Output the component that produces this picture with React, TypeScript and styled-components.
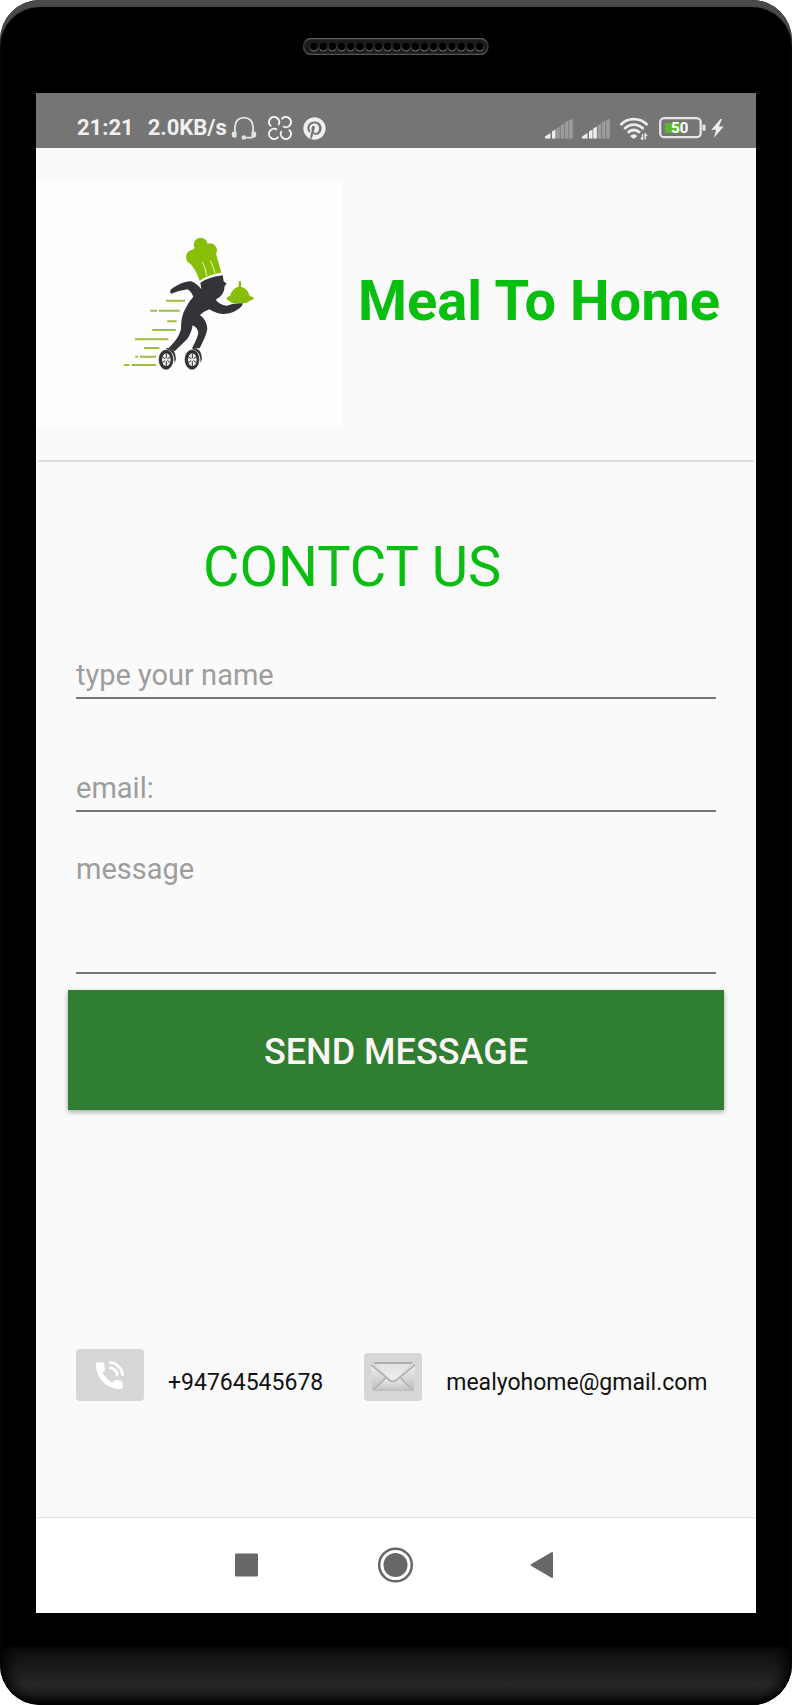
import React from "react";
import styled, { createGlobalStyle } from "styled-components";
import { FaPinterest } from "react-icons/fa";

const GlobalStyle = createGlobalStyle`
  *, *::before, *::after { box-sizing: border-box; }
  body { margin: 0; background: #fff; font-family: Roboto, "Liberation Sans", sans-serif; }
  h1, h2 { margin: 0; }
  svg { display: block; flex: none; }
`;

const Phone = styled.div`
  display: flex;
  flex-direction: column;
  min-height: 100vh;
  background: #000;
  border-radius: 40px;
  overflow: hidden;
  box-shadow: inset 0 7px 1px #4a4a4a;
`;

const Earpiece = styled.div`
  display: flex;
  justify-content: center;
  padding: 38px 0;
`;

const Screen = styled.main`
  display: flex;
  flex: 1;
  flex-direction: column;
  margin: 0 36px;
  background: #fafafa;
`;

const Chin = styled.div`
  height: 58px;
  margin-top: 34px;
  border-radius: 0 0 40px 40px;
  background: linear-gradient(#0c0c0c, #272727 66%, #1c1c1c 82%, #000);
  box-shadow: inset 12px 0 14px -6px #000, inset -12px 0 14px -6px #000;
`;

const StatusBar = styled.div`
  display: flex;
  align-items: center;
  justify-content: space-between;
  height: 55px;
  padding: 15px 32px 0 41px;
  background: #757575;
  color: #f0f0f0;
  font-size: 22px;
  font-weight: 700;
  line-height: 26px;
`;

const StatusGroup = styled.div<{ $gap: number }>`
  display: flex;
  align-items: center;
  gap: ${(p) => p.$gap}px;
`;

const Header = styled.header`
  display: flex;
  align-items: center;
  gap: 16px;
  margin: 0 2px;
  padding: 32px 0;
  border-bottom: 2px solid #dcdcdc;
`;

const LogoPanel = styled.div`
  display: flex;
  flex: 0 0 306px;
  align-items: center;
  justify-content: center;
  height: 248px;
  margin-left: -2px;
  background: #fefefe;
`;

const Brand = styled.h1`
  padding-bottom: 6px;
  color: #08bf10;
  font-size: 56px;
  font-weight: 700;
  line-height: 66px;
`;

const ContactForm = styled.form`
  display: flex;
  flex-direction: column;
  padding: 72px 32px 0;
`;

const FormTitle = styled.h2`
  padding: 0 0 50px 135px;
  color: #08bf10;
  font-size: 56px;
  font-weight: 400;
  line-height: 66px;
`;

const Field = styled.input`
  height: 49px;
  margin: 0 8px 64px;
  padding: 8px 0 5px;
  border: 0;
  border-bottom: 2px solid #757575;
  border-radius: 0;
  outline: 0;
  background: transparent;
  color: #222;
  font: 400 29px/34px Roboto, "Liberation Sans", sans-serif;
  &::placeholder { color: #9d9d9d; opacity: 1; }
  &[type="email"] { margin-bottom: 32px; }
`;

const MessageField = styled(Field).attrs({ as: "textarea" })`
  height: 130px;
  margin-bottom: 16px;
  resize: none;
`;

const SendButton = styled.button`
  height: 120px;
  padding: 4px 0 0;
  border: 0;
  background: #2f7e32;
  box-shadow: 0 2px 5px rgba(0, 0, 0, 0.35);
  color: #fdf6f6;
  font: 500 36px/42px Roboto, "Liberation Sans", sans-serif;
  cursor: pointer;
`;

const Contacts = styled.div`
  display: flex;
  align-items: flex-end;
  gap: 41px;
  margin-top: auto;
  padding: 40px 32px 116px 40px;
`;

const Contact = styled.div<{ $gap: number }>`
  display: flex;
  align-items: flex-end;
  gap: ${(p) => p.$gap}px;
`;

const IconButton = styled.button<{ $width: number; $height: number }>`
  display: flex;
  align-items: center;
  justify-content: center;
  width: ${(p) => p.$width}px;
  height: ${(p) => p.$height}px;
  padding: 0;
  border: 0;
  border-radius: 4px;
  background: #d6d8d7;
  color: #fff;
  cursor: pointer;
`;

const ContactLink = styled.a`
  padding-bottom: 4px;
  color: #111;
  font-size: 23px;
  line-height: 28px;
  text-decoration: none;
`;

const NavBar = styled.nav`
  display: flex;
  justify-content: center;
  height: 96px;
  padding-bottom: 2px;
  border-top: 1px solid #e0e0e0;
  background: #fff;
`;

const NavButton = styled.button`
  display: flex;
  align-items: center;
  justify-content: center;
  width: 148px;
  padding: 0;
  border: 0;
  background: transparent;
  color: #676767;
  cursor: pointer;
`;

const holes = Array.from({ length: 19 }, (_, i) => 11 + i * 9.2);

function SpeakerGrille() {
  return (
    <svg width="186" height="17" viewBox="0 0 186 17">
      <defs>
        <linearGradient id="rim" x1="0" y1="0" x2="0" y2="1">
          <stop offset="0" stopColor="#5a5a5a" />
          <stop offset="0.4" stopColor="#303030" />
          <stop offset="1" stopColor="#555" />
        </linearGradient>
      </defs>
      <rect x="0.5" y="0.5" width="184.500" height="16" rx="8" fill="#1c1c1c" stroke="url(#rim)" strokeWidth="1.500" />
      {holes.map((x) => (
        <g key={x}>
          <circle cx={x} cy="9.400" r="4" fill="#6a6a6a" />
          <circle cx={x} cy="8.600" r="3.800" fill="#000" />
        </g>
      ))}
    </svg>
  );
}

function HeadsetIcon() {
  return (
    <svg width="26" height="24" viewBox="0 0 26 24" fill="none" stroke="#e4e4e4">
      <path d="M4 17V10.500C4 5 8 1.600 13 1.600S22 5 22 10.500V17M22 20.500q0 1.200-1.500 1.200H13" strokeWidth="1.800" />
      <path d="M3 15.500h2.500v6H3Q.8 21.500.8 19.500V17.500Q.8 15.500 3 15.500ZM23 15.500h-2.500v6H23q2.200 0 2.200-2V17.500Q25.200 15.500 23 15.500Z" fill="#e4e4e4" stroke="none" />
      <circle cx="12.800" cy="21.400" r="2.200" fill="#e4e4e4" stroke="none" />
    </svg>
  );
}

function CloverIcon() {
  return (
    <svg width="24" height="24" viewBox="0 0 24 24" fill="none" stroke="#f2f2f2" strokeWidth="2">
      <path d="M3.200 10.300A5.100 5.100 0 1 1 10.300 9" />
      <path d="M13.700 3.200A5.100 5.100 0 1 1 15 10.300" />
      <path d="M10.300 20.800A5.100 5.100 0 1 1 9 13.700" />
      <path d="M20.800 13.700A5.100 5.100 0 1 1 13.700 15" />
    </svg>
  );
}

function SignalIcon({ level }: { level: number }) {
  return (
    <svg width="28" height="21" viewBox="0 0 28 21">
      <path d="M0 20.500V18.500L5.500 15V20.500Z" fill="#eee" />
      {[12, 9, 6, 3, 1].map((top, i) => {
        const x = 7 + i * 4.300;
        return <path key={top} d={`M${x} 20.500V${top + 1.500}L${x + 3.500} ${top - 0.500}V20.500Z`} fill={i + 1 < level ? "#eee" : "#9c9c9c"} />;
      })}
    </svg>
  );
}

function WifiIcon() {
  return (
    <svg width="31" height="23" viewBox="0 0 31 23" fill="none" stroke="#ececec">
      <path d="M1.500 8Q7 2.200 14.800 2.200T28.500 8" strokeWidth="2.800" />
      <path d="M5.200 12Q9.500 7.600 14.800 7.600T24.600 12" strokeWidth="2.800" />
      <path d="M9 15.800Q11.500 13 14.800 13T21 15.800" strokeWidth="2.800" />
      <path d="M11 19Q14.700 15.600 18.500 19L14.700 22Z" fill="#ececec" stroke="none" />
      <path d="M23.600 17V22.500L21.800 20.500M26.200 22.500V17L28 19" strokeWidth="1.300" />
    </svg>
  );
}

function BatteryIcon() {
  return (
    <svg width="47" height="22" viewBox="0 0 47 22">
      <rect x="1.200" y="1.200" width="40.500" height="19" rx="4" fill="none" stroke="#e6e6e6" strokeWidth="2.300" />
      <rect x="6" y="6" width="16" height="10" rx="1" fill="#5cb82b" />
      <rect x="43.500" y="7.500" width="3" height="6.500" rx="1.400" fill="#e6e6e6" />
      <text x="20.700" y="16" textAnchor="middle" fontSize="15" fontWeight="700" fill="#fff">50</text>
    </svg>
  );
}

function BoltIcon() {
  return (
    <svg width="13" height="19" viewBox="0 0 13 19">
      <path d="M9.500 0L.3 10.700H5.200L2.800 19L12.700 7.600H7.800L11 0Z" fill="#eee" />
    </svg>
  );
}

function Wheel({ x }: { x: number }) {
  return (
    <g transform={`translate(${x} 419)`}>
      <path d="M4 -36Q29 -34 30 -2L26 10Q26 -26 0 -32Z" fill="#38383c" />
      <ellipse rx="21" ry="29" fill="#303034" stroke="#303034" strokeWidth="2" />
      <ellipse cx="1" rx="13" ry="19" fill="#eee" />
      <path d="M1 -19V19M-11 -9L13 9M13 -9L-11 9" stroke="#303034" strokeWidth="3" />
      <ellipse cx="1" rx="4" ry="5" fill="#eee" />
    </g>
  );
}

function RunnerLogo() {
  return (
    <svg width="160" height="160" viewBox="-3 12 480 480" role="img" aria-label="Running chef carrying a dish">
      <path
        d="M168 242H225M121 272H141M147 272H209M172 304H200M127 330H197M75 358H175M102 384H148M76 410H84M90 410H138M42 435H58M65 435H138"
        stroke="#9dbd42"
        strokeWidth="6"
      />
      <g fill="#87be08">
        <circle cx="250" cy="111" r="22" />
        <circle cx="272" cy="74" r="21" />
        <circle cx="300" cy="91" r="21" />
        <path d="M238 128L240 98L256 82L296 76L319 104L334 158Q298 162 269 182Q258 148 238 128Z" />
        <path d="M350 238Q348 231 360 228Q367 204 386 200V185Q390 181 393 185V200Q413 205 419 227L432 233Q430 240 420 242L408 249H366Z" />
      </g>
      <path d="M277 126Q287 144 290 168M301 122Q311 142 315 160" stroke="#eef6d8" strokeWidth="3" fill="none" />
      <path
        d="M271 188Q300 170 338 166L341 184L350 191L344 198Q344 226 317 239Q328 254 350 257Q374 248 399 250Q396 264 370 276Q345 287 322 279Q308 275 298 268Q280 275 270 285Q292 302 292 328Q289 346 269 385H246Q264 350 265 338Q262 322 248 316Q244 340 231 358L194 394L176 384Q206 356 213 328Q212 290 226 266Q236 244 250 230Q242 212 232 208Q212 211 184 221Q175 214 188 204Q222 182 244 184Q260 190 274 208Z"
        fill="#343438"
      />
      <Wheel x={168} />
      <Wheel x={246} />
    </svg>
  );
}

function CallIcon() {
  return (
    <svg width="28" height="28" viewBox="138 93 84 84">
      <path
        d="M142 97H158Q161 97 162 101Q163 111 166 118L157 129Q168 147 186 158L196 149Q206 151 214 152Q218 153 218 157V172Q218 177 213 177Q180 177 158 155Q138 133 138 102Q138 97 142 97Z"
        fill="currentColor"
      />
      <path d="M177 97.500A41 41 0 0 1 218 138M178 113A24 24 0 0 1 202 137" fill="none" stroke="currentColor" strokeWidth="8" />
    </svg>
  );
}

function EnvelopeIcon() {
  return (
    <svg width="46" height="32" viewBox="0 0 46 32">
      <defs>
        <linearGradient id="paper" x1="0" y1="0" x2="0" y2="1">
          <stop offset="0" stopColor="#f0f0f0" />
          <stop offset="1" stopColor="#bdbdbd" />
        </linearGradient>
        <linearGradient id="flap" x1="0" y1="0" x2="0" y2="1">
          <stop offset="0" stopColor="#e0e0e0" />
          <stop offset="1" stopColor="#efefef" />
        </linearGradient>
      </defs>
      <path d="M1 5L15 16L2 29ZM45 5L31 16L44 29Z" fill="url(#paper)" />
      <path d="M4 30L17 17Q23 22 29 17L42 30Z" fill="url(#paper)" />
      <path d="M4 2.500H42L28 16Q23 22 18 16Z" fill="url(#flap)" />
      <path d="M4 2H42" stroke="#a0a0a0" strokeWidth="1.500" />
      <path d="M1 4L17 17Q23 24 29 17L45 4M15.500 17L3 29.500M30.500 17L43 29.500" fill="none" stroke="#aaa" strokeWidth="1.300" />
    </svg>
  );
}

export default function App() {
  return (
    <>
      <GlobalStyle />
      <Phone>
        <Earpiece>
          <SpeakerGrille />
        </Earpiece>
        <Screen>
          <StatusBar>
            <StatusGroup $gap={14}>
              <span>21:21</span>
              <StatusGroup $gap={4}>
                <span>2.0KB/s</span>
                <StatusGroup $gap={11}>
                  <HeadsetIcon />
                  <CloverIcon />
                  <FaPinterest size={23} />
                </StatusGroup>
              </StatusGroup>
            </StatusGroup>
            <StatusGroup $gap={9}>
              <SignalIcon level={2} />
              <SignalIcon level={3} />
              <WifiIcon />
              <StatusGroup $gap={5}>
                <BatteryIcon />
                <BoltIcon />
              </StatusGroup>
            </StatusGroup>
          </StatusBar>
          <Header>
            <LogoPanel>
              <RunnerLogo />
            </LogoPanel>
            <Brand>Meal To Home</Brand>
          </Header>
          <ContactForm onSubmit={(e: React.FormEvent) => e.preventDefault()}>
            <FormTitle>CONTCT US</FormTitle>
            <Field type="text" aria-label="Name" placeholder="type your name" />
            <Field type="email" aria-label="Email" placeholder="email:" />
            <MessageField aria-label="Message" placeholder="message" />
            <SendButton type="submit">SEND MESSAGE</SendButton>
          </ContactForm>
          <Contacts>
            <Contact $gap={24}>
              <IconButton type="button" aria-label="Call" $width={68} $height={52}>
                <CallIcon />
              </IconButton>
              <ContactLink href="tel:+94764545678">+94764545678</ContactLink>
            </Contact>
            <Contact $gap={24}>
              <IconButton type="button" aria-label="Send email" $width={58} $height={48}>
                <EnvelopeIcon />
              </IconButton>
              <ContactLink href="mailto:mealyohome@gmail.com">mealyohome@gmail.com</ContactLink>
            </Contact>
          </Contacts>
          <NavBar>
            <NavButton type="button" aria-label="Recent apps">
              <svg width="26" height="24" viewBox="0 0 26 24">
                <rect x="0" y="0.500" width="23" height="23" rx="1" fill="currentColor" />
              </svg>
            </NavButton>
            <NavButton type="button" aria-label="Home">
              <svg width="36" height="36" viewBox="0 0 36 36">
                <circle cx="17.500" cy="18" r="16.300" fill="none" stroke="currentColor" strokeWidth="2.500" />
                <circle cx="17.500" cy="18" r="12" fill="currentColor" />
              </svg>
            </NavButton>
            <NavButton type="button" aria-label="Back">
              <svg width="28" height="28" viewBox="0 0 28 28">
                <path d="M1.500 14L22 2V26Z" fill="currentColor" stroke="currentColor" strokeWidth="2" strokeLinejoin="round" />
              </svg>
            </NavButton>
          </NavBar>
        </Screen>
        <Chin />
      </Phone>
    </>
  );
}
